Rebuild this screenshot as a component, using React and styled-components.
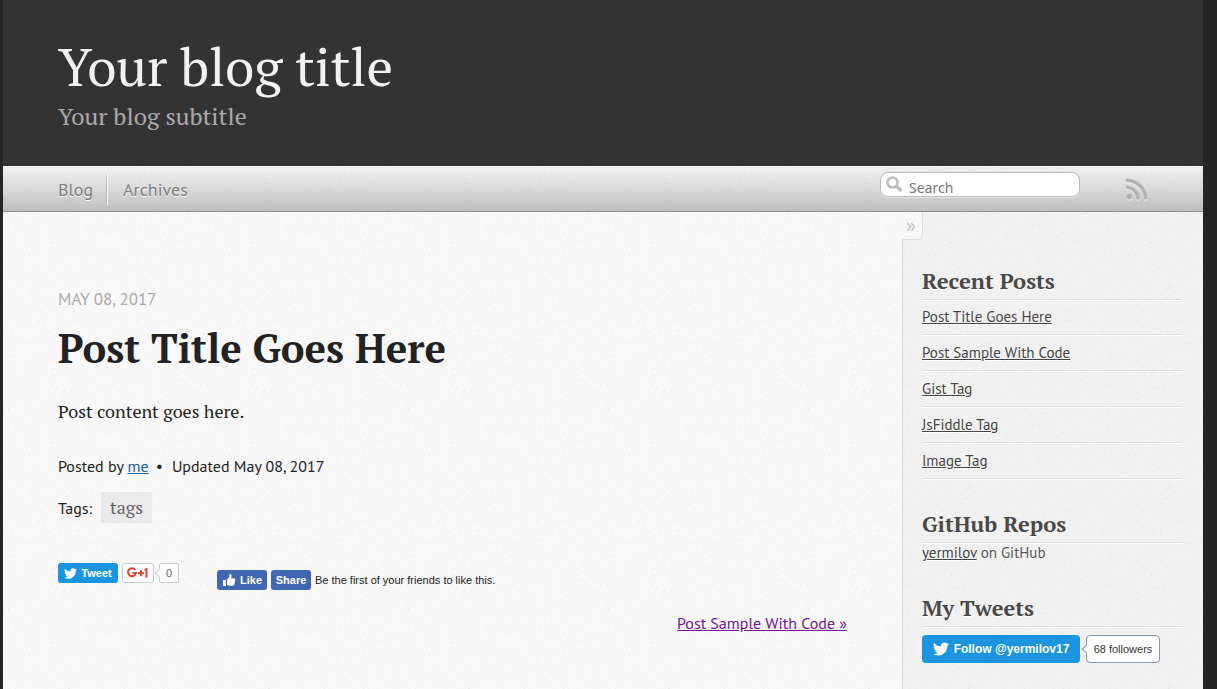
import React from "react";
import styled, { createGlobalStyle } from "styled-components";

const serif = '"PT Serif", "Liberation Serif", serif';
const sans = '"PT Sans", Lato, sans-serif';
const widget = '"Liberation Sans", sans-serif';

// A seamless paper-grain tile: small translucent specks scattered over a square.
function grainTile(size, count) {
  let seed = 7;
  const next = () => {
    seed = (seed * 16807) % 2147483647;
    return seed / 2147483647;
  };
  let specks = "";
  for (let i = 0; i < count; i += 1) {
    const x = Math.floor(next() * size);
    const y = Math.floor(next() * size);
    const o = (0.01 + next() * next() * next() * 0.09).toFixed(3);
    specks += `<rect x='${x}' y='${y}' width='1' height='1' fill-opacity='${o}'/>`;
  }
  const svg = `<svg xmlns='http://www.w3.org/2000/svg' width='${size}' height='${size}'>${specks}</svg>`;
  return `url("data:image/svg+xml,${encodeURIComponent(svg).replace(/'/g, "%27")}")`;
}
const grain = grainTile(200, 3600);

const GlobalStyle = createGlobalStyle`
  *, *::before, *::after { box-sizing: border-box; }
  body {
    margin: 0;
    background: #252525;
    color: #222;
    font-family: ${sans};
  }
  h1, h2, h3, p, ul { margin: 0; padding: 0; }
`;

const Page = styled.div`
  display: flex;
  flex-direction: column;
  min-height: 100vh;
  padding: 0 14px 0 3px;
`;

const Header = styled.header`
  padding: 32px 55px 34px;
  background: #333;
  font-family: ${serif};
`;

const BlogTitle = styled.h1`
  font-size: 53px;
  font-weight: 400;
  line-height: 69px;
  color: #f2f2f2;
`;

const BlogSubtitle = styled.p`
  font-size: 24px;
  line-height: 31px;
  color: #aaa;
`;

const NavBar = styled.nav`
  display: flex;
  align-items: center;
  height: 46px;
  padding: 0 55px;
  border-top: 1px solid #fff;
  border-bottom: 1px solid #8f8f8f;
  background: ${grain}, linear-gradient(#f0f0f0, #dcdcdc 45%, #bfbfbf);
`;

const NavItems = styled.ul`
  display: flex;
  flex: 1;
  padding-top: 2px;
  list-style: none;
  line-height: 30px;

  li + li {
    margin-left: 13px;
    padding-left: 16px;
    border-left: 1px solid #b5b5b5;
    box-shadow: inset 1px 0 #fff;
  }
`;

const NavLink = styled.a`
  font-size: 18px;
  color: #7d7d7d;
  text-decoration: none;
  text-shadow: 0 1px #fff;
`;

const SearchForm = styled.form`
  display: flex;
  align-items: center;
  gap: 6px;
  width: 200px;
  height: 25px;
  margin: 0 46px 10px 0;
  padding: 0 5px;
  border: 1px solid #bbb;
  border-radius: 8px;
  background: #fff;
  box-shadow: 0 1px #e4e4e4;
`;

const SearchInput = styled.input`
  flex: 1;
  min-width: 0;
  height: 23px;
  padding: 6px 0 0;
  border: 0;
  outline: 0;
  background: transparent;
  font: 14px "Noto Sans", sans-serif;
  color: #777;

  &::placeholder { color: #777; opacity: 1; }
`;

const FeedLink = styled.a`
  display: flex;
  color: #b3b3b3;
  filter: drop-shadow(0 1px #f0f0f0);
`;

const Columns = styled.div`
  display: flex;
  flex: 1;
  background: ${grain}, #f8f8f8;
`;

const Main = styled.main`
  flex: 1;
  padding: 77px 55px 40px;
`;

const PostDate = styled.time`
  display: block;
  font-size: 17px;
  line-height: 20px;
  text-transform: uppercase;
  color: #aaa;
`;

const PostTitle = styled.h2`
  margin-top: 15px;
  font: 700 40px/48px ${serif};
`;

const PostBody = styled.p`
  margin-top: 26px;
  font: 18px/26px ${serif};
`;

const Meta = styled.p`
  display: flex;
  margin-top: 30px;
  font-size: 16px;
  line-height: 24px;
  white-space: pre;

  a { color: #1863a1; }
  span { margin: 0 9px 0 7px; }
`;

const Tags = styled.div`
  display: flex;
  align-items: center;
  gap: 9px;
  margin-top: 14px;
  font-size: 16px;
`;

const Tag = styled.a`
  padding: 0 9px;
  background: #eaeaea;
  font: 18px/31px ${serif};
  color: #666;
  text-decoration: none;
`;

const Sharing = styled.div`
  display: flex;
  align-items: flex-start;
  gap: 38px;
  margin-top: 40px;
  font-family: ${widget};
`;

const ButtonGroup = styled.div`
  display: flex;
  align-items: center;
  gap: 4px;
  padding-top: ${(p) => (p.$lowered ? 7 : 0)}px;
  font-size: 11px;
`;

const colours = {
  twitter: "#1b95e0",
  facebook: "#4267b2",
  google: "#fff",
};

const SocialButton = styled.button`
  display: flex;
  align-items: center;
  justify-content: center;
  gap: ${(p) => (p.$large ? 5 : 4)}px;
  width: ${(p) => p.$width}px;
  height: ${(p) => (p.$large ? 28 : 20)}px;
  padding: 0;
  border: ${(p) => (p.$brand === "google" ? "1px solid #ccc" : "0")};
  border-radius: ${(p) => (p.$large ? 4 : 3)}px;
  background: ${(p) => colours[p.$brand]};
  color: ${(p) => (p.$brand === "google" ? "#db4437" : "#fff")};
  font: 700 ${(p) => (p.$large ? 12 : 11)}px ${widget};
  white-space: nowrap;
`;

const CountBubble = styled.a`
  position: relative;
  display: flex;
  align-items: center;
  justify-content: center;
  width: ${(p) => p.$width}px;
  height: ${(p) => (p.$large ? 28 : 20)}px;
  margin-left: ${(p) => (p.$large ? 2 : 1)}px;
  border: 1px solid ${(p) => (p.$large ? "#8b98a8" : "#ccc")};
  border-radius: ${(p) => (p.$large ? 4 : 2)}px;
  background: #fff;
  font: 11px ${widget};
  text-decoration: none;

  && { color: ${(p) => (p.$large ? "#333" : "#666")}; }

  &::before {
    content: "";
    position: absolute;
    top: 50%;
    left: -4px;
    width: 6px;
    height: 6px;
    margin-top: -3px;
    border: solid ${(p) => (p.$large ? "#8b98a8" : "#ccc")};
    border-width: 0 0 1px 1px;
    background: #fff;
    transform: rotate(45deg);
  }
`;

const Pager = styled.div`
  display: flex;
  justify-content: flex-end;
  margin-top: 23px;
  font-size: 16px;
  line-height: 20px;

  a { color: #751590; }
`;

const Sidebar = styled.aside`
  position: relative;
  width: 301px;
  padding: 53px 21px 26px 19px;
  border-left: 1px solid #dedede;
  background: ${grain}, #f1f1f1;
  color: #555;
`;

const CollapseButton = styled.button`
  position: absolute;
  top: 0;
  left: -1px;
  width: 21px;
  height: 28px;
  padding: 0 2px 2px 0;
  border: solid #dedede;
  border-width: 0 1px 1px 0;
  border-radius: 0 0 6px 0;
  background: ${grain}, #f8f8f8;
  font: 20px/20px ${sans};
  color: #c4c4c4;
`;

const Section = styled.section`
  margin-bottom: 29px;
  font-size: 15px;
  line-height: 20px;
  text-shadow: 0 1px #fff;

  a { color: #444; }
`;

const SectionTitle = styled.h3`
  padding-bottom: 2px;
  border-bottom: 1px solid #dedede;
  box-shadow: 0 1px #fff;
  font: 700 22px/32px ${serif};
  color: #484848;
`;

const PostList = styled.ul`
  list-style: none;

  li {
    padding: 8px 0 7px;
    border-bottom: 1px solid #dedede;
    box-shadow: 0 1px #fff;
  }

  li:first-child { padding-top: 7px; }
`;

const FollowRow = styled.div`
  display: flex;
  gap: 4px;
  padding-top: 8px;
  text-shadow: none;
`;

function BirdIcon({ size }) {
  return (
    <svg width={size} height={size} viewBox="0 0 24 24" fill="currentColor" aria-hidden="true">
      <path d="M23.95 4.57a10 10 0 0 1-2.82.77 4.96 4.96 0 0 0 2.16-2.72c-.95.55-2 .95-3.12 1.19a4.92 4.92 0 0 0-8.39 4.48C7.69 8.1 4.07 6.13 1.64 3.16a4.93 4.93 0 0 0 1.52 6.57 4.9 4.9 0 0 1-2.23-.61v.06a4.92 4.92 0 0 0 3.95 4.83 5 5 0 0 1-2.21.08 4.94 4.94 0 0 0 4.6 3.42A9.87 9.87 0 0 1 0 19.54a13.99 13.99 0 0 0 7.55 2.21c9.05 0 14-7.5 14-13.98 0-.21 0-.42-.02-.63a9.94 9.94 0 0 0 2.42-2.57z" />
    </svg>
  );
}

function ThumbIcon() {
  return (
    <svg width="14" height="14" viewBox="0 0 14 14" fill="currentColor" aria-hidden="true">
      <path d="M1 7h3v6H1zM5 6.6 7.3 4 7.6 1q1.9-.4 2 1.5L9.2 5.2h3.2q1.2.2.9 1.6l-.9 4.8q-.3 1.1-1.4 1.1H7L5 11.9z" />
    </svg>
  );
}

function PlusOneIcon() {
  return (
    <svg width="22" height="12" viewBox="0 0 22 12" fill="none" stroke="currentColor" strokeWidth="2" aria-hidden="true">
      <path d="M8.3 2.8A4 4 0 1 0 9 6H5.4M11 6.2h6M14 3.2v6M17.5 2.9l2-.7v8.6" />
    </svg>
  );
}

function LensIcon() {
  return (
    <svg width="17" height="17" viewBox="0 0 17 17" fill="none" stroke="#bdbdbd" aria-hidden="true">
      <circle cx="6.5" cy="6.5" r="5" strokeWidth="2.6" />
      <path d="m10 10 5.5 5" strokeWidth="3.6" />
    </svg>
  );
}

function FeedIcon() {
  return (
    <svg width="22" height="22" viewBox="0 0 22 22" fill="none" stroke="currentColor" strokeWidth="3.6" aria-hidden="true">
      <circle cx="3" cy="18.5" r="3" fill="currentColor" stroke="none" />
      <path d="M0 9.3a12 12 0 0 1 12.2 12.2M0 2.2a19.4 19.4 0 0 1 19.8 19.3" />
    </svg>
  );
}

const recentPosts = [
  "Post Title Goes Here",
  "Post Sample With Code",
  "Gist Tag",
  "JsFiddle Tag",
  "Image Tag",
];

export default function App() {
  return (
    <>
      <GlobalStyle />
      <Page>
        <Header>
          <BlogTitle>Your blog title</BlogTitle>
          <BlogSubtitle>Your blog subtitle</BlogSubtitle>
        </Header>
        <NavBar>
          <NavItems>
            <li><NavLink href="#blog">Blog</NavLink></li>
            <li><NavLink href="#archives">Archives</NavLink></li>
          </NavItems>
          <SearchForm role="search">
            <LensIcon />
            <SearchInput type="text" placeholder="Search" aria-label="Search" />
          </SearchForm>
          <FeedLink href="#feed" aria-label="Subscribe via RSS"><FeedIcon /></FeedLink>
        </NavBar>
        <Columns>
          <Main>
            <article>
              <PostDate dateTime="2017-05-08">May 08, 2017</PostDate>
              <PostTitle>Post Title Goes Here</PostTitle>
              <PostBody>Post content goes here.</PostBody>
              <Meta>
                Posted by <a href="#me">me</a>
                <span>•</span>
                Updated May 08, 2017
              </Meta>
              <Tags>
                Tags: <Tag href="#tags">tags</Tag>
              </Tags>
              <Sharing>
                <ButtonGroup>
                  <SocialButton $brand="twitter" $width={60}><BirdIcon size={13} />Tweet</SocialButton>
                  <SocialButton $brand="google" $width={32} aria-label="Google plus one"><PlusOneIcon /></SocialButton>
                  <CountBubble href="#plusones" $width={20}>0</CountBubble>
                </ButtonGroup>
                <ButtonGroup $lowered>
                  <SocialButton $brand="facebook" $width={50}><ThumbIcon />Like</SocialButton>
                  <SocialButton $brand="facebook" $width={40}>Share</SocialButton>
                  Be the first of your friends to like this.
                </ButtonGroup>
              </Sharing>
            </article>
            <Pager><a href="#next">Post Sample With Code »</a></Pager>
          </Main>
          <Sidebar>
            <CollapseButton aria-label="Toggle sidebar">»</CollapseButton>
            <Section>
              <SectionTitle>Recent Posts</SectionTitle>
              <PostList>
                {recentPosts.map((title) => (
                  <li key={title}><a href="#post">{title}</a></li>
                ))}
              </PostList>
            </Section>
            <Section>
              <SectionTitle>GitHub Repos</SectionTitle>
              <p><a href="#github">yermilov</a> on GitHub</p>
            </Section>
            <Section>
              <SectionTitle>My Tweets</SectionTitle>
              <FollowRow>
                <SocialButton $brand="twitter" $width={158} $large><BirdIcon size={16} />Follow @yermilov17</SocialButton>
                <CountBubble href="#followers" $width={74} $large>68 followers</CountBubble>
              </FollowRow>
            </Section>
          </Sidebar>
        </Columns>
      </Page>
    </>
  );
}
